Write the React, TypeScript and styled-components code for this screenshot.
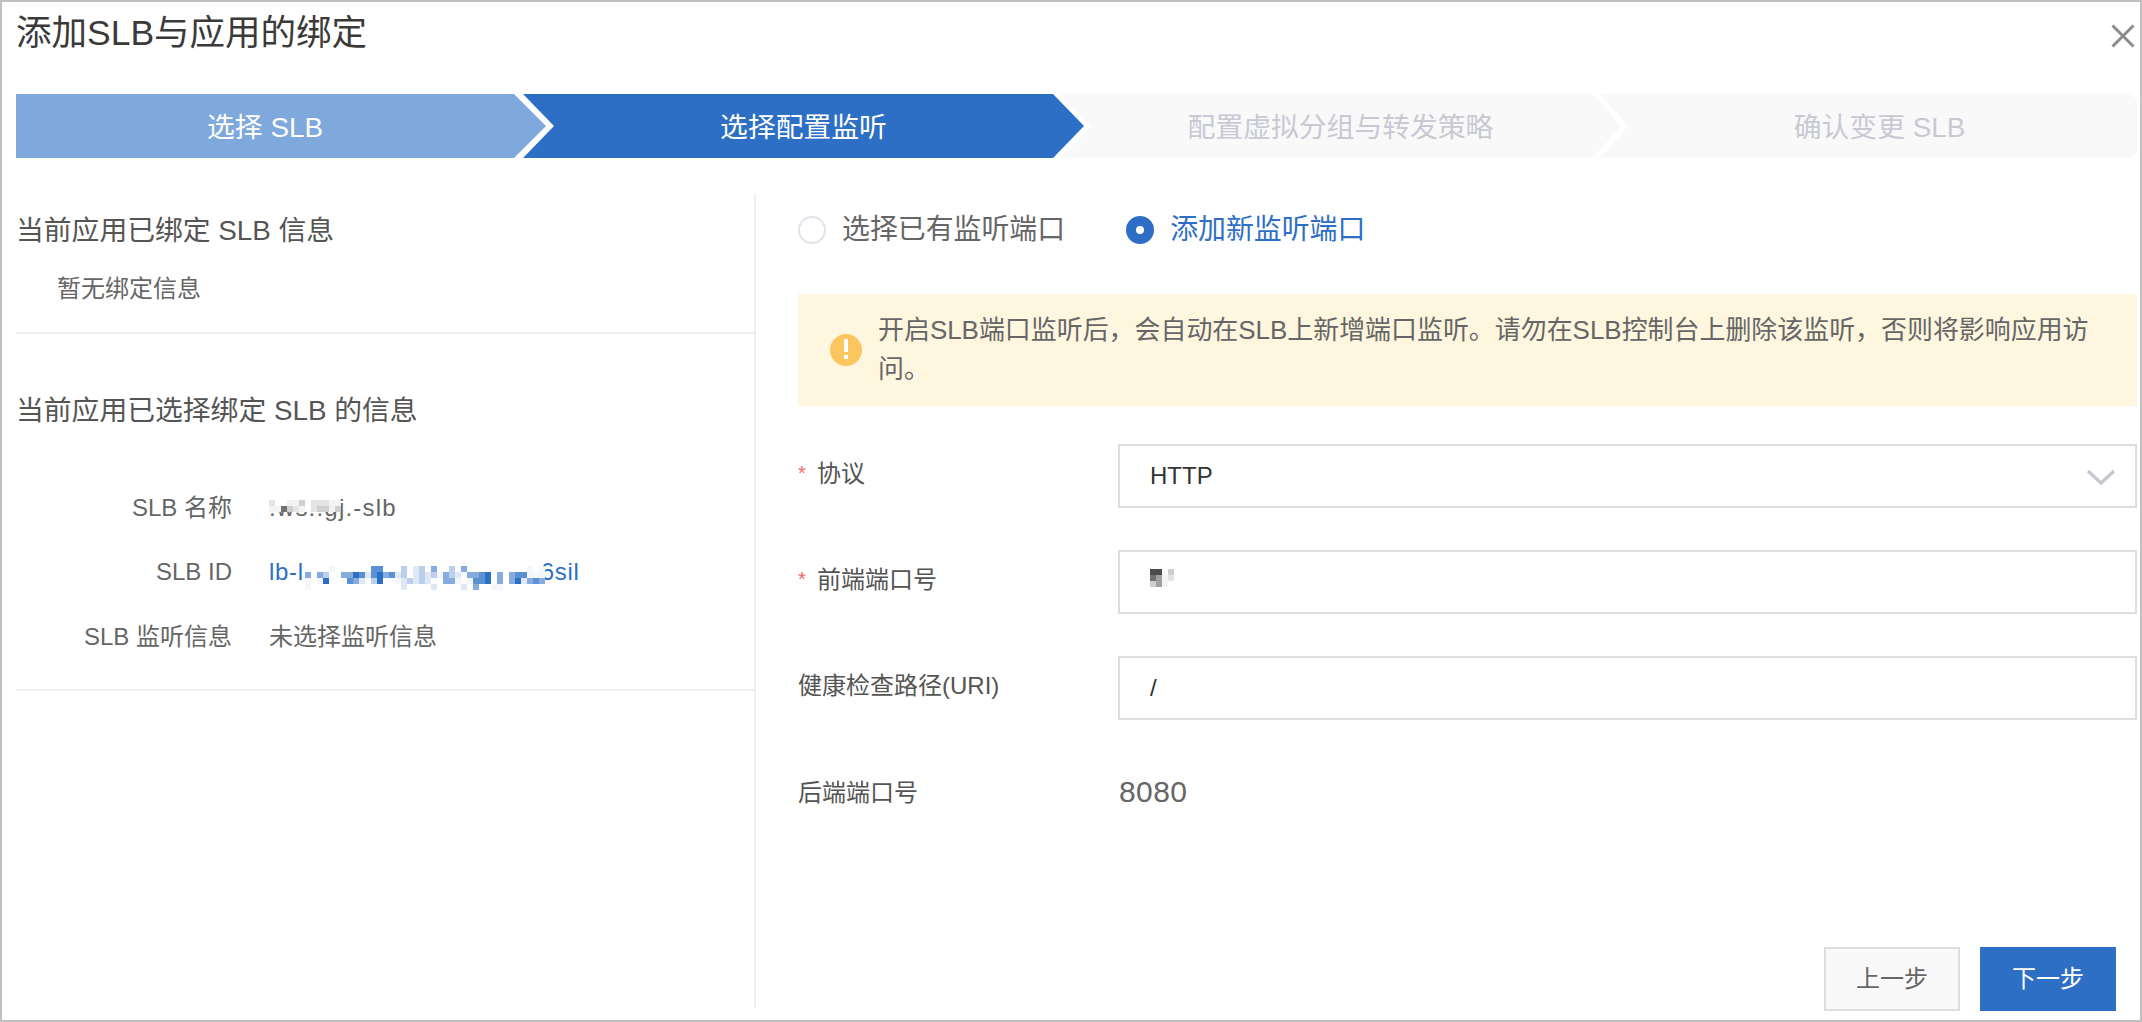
import React from "react";
import styled, { createGlobalStyle } from "styled-components";

const Global = createGlobalStyle`
  html, body { margin: 0; padding: 0; background: #fff; }
  body { font-family: "Liberation Sans", "Noto Sans CJK SC", sans-serif; }
  * { box-sizing: border-box; }
`;

const Frame = styled.div`
  width: 2142px;
  height: 1022px;
  border: 2px solid #c0c0c0;
  padding: 0 3px 0 14px;
  background: #fff;
  overflow: hidden;
`;

const Header = styled.header`
  display: flex;
  justify-content: space-between;
  align-items: flex-start;
  height: 92px;
`;

const Title = styled.h1`
  margin: 0;
  font-size: 35.5px;
  line-height: 62px;
  font-weight: 400;
  color: #3a3a3a;
`;

const CloseIcon = styled.svg`
  width: 24px;
  height: 24px;
  margin-top: 22px;
  margin-right: 2px;
  stroke: #8c8c8c;
  stroke-width: 3;
  fill: none;
`;

const Steps = styled.nav`
  display: flex;
  height: 64px;
`;

const Step = styled.div<{ $bg: string; $fg: string; $w: number; $mr: number; $clip: string; $pl?: number; $pr?: number }>`
  flex: 0 0 ${(p) => p.$w}px;
  margin-right: ${(p) => p.$mr}px;
  padding: 0 ${(p) => p.$pr ?? 0}px 2px ${(p) => p.$pl ?? 0}px;
  display: flex;
  align-items: center;
  justify-content: center;
  background: ${(p) => p.$bg};
  color: ${(p) => p.$fg};
  font-size: 27.8px;
  clip-path: polygon(${(p) => p.$clip});
`;

const Body = styled.div`
  display: grid;
  grid-template-columns: 740px 1fr;
  margin-top: 36px;
  height: 817px;
`;

const LeftPanel = styled.aside`
  height: 814px;
  border-right: 2px solid #f0f0f4;
  padding-top: 19px;
`;

const SectionTitle = styled.h2<{ $mt?: number }>`
  margin: ${(p) => p.$mt ?? 0}px 0 0;
  font-size: 27.8px;
  line-height: 36px;
  font-weight: 400;
  color: #555;
`;

const EmptyNote = styled.div`
  margin-top: 24px;
  padding-left: 41px;
  font-size: 24px;
  line-height: 32px;
  color: #666;
`;

const Rule = styled.hr<{ $mt: number }>`
  margin: ${(p) => p.$mt}px 0 0;
  border: 0;
  height: 2px;
  background: #f0f0f4;
`;

const InfoList = styled.div`
  display: grid;
  grid-template-columns: 216px 1fr;
  column-gap: 37px;
  row-gap: 31.5px;
  margin-top: 63px;
  font-size: 24px;
  line-height: 32px;
`;

const InfoLabel = styled.div`
  text-align: right;
  color: #666;
`;

const InfoValue = styled.div<{ $link?: boolean }>`
  position: relative;
  display: flex;
  align-items: flex-start;
  color: ${(p) => (p.$link ? "#2d6fc5" : "#666")};
  letter-spacing: ${(p) => (p.$link ? "0.7px" : "0")};
`;

const NameText = styled.span`
  letter-spacing: 1.2px;
`;

const MosaicOverlay = styled.svg<{ $top: number; $left: number }>`
  position: absolute;
  top: ${(p) => p.$top}px;
  left: ${(p) => p.$left}px;
  shape-rendering: crispEdges;
`;

const IdMosaic = styled.svg`
  flex: none;
  position: relative;
  z-index: 1;
  margin: 10px -4px 0 1px;
  shape-rendering: crispEdges;
`;

const RightPanel = styled.main`
  display: flex;
  flex-direction: column;
  padding-left: 42px;
  padding-top: 18px;
`;

const RadioGroup = styled.div`
  display: flex;
  gap: 61px;
  height: 36px;
`;

const RadioItem = styled.label<{ $on?: boolean }>`
  display: flex;
  align-items: center;
  gap: 16px;
  font-size: 27.9px;
  line-height: 36px;
  color: ${(p) => (p.$on ? "#2d6fc5" : "#666")};
`;

const RadioMark = styled.span<{ $on?: boolean }>`
  width: 28px;
  height: 28px;
  border-radius: 50%;
  flex: none;
  border: ${(p) => (p.$on ? "10px solid #2d6fc5" : "2px solid #e2e3ea")};
  background: #fff;
`;

const Alert = styled.div`
  display: flex;
  align-items: center;
  gap: 16px;
  height: 112px;
  margin-top: 46px;
  padding: 0 30px 0 32px;
  background: #fef6df;
  font-size: 25.94px;
  line-height: 39px;
  color: #666;
`;

const AlertIcon = styled.span`
  flex: none;
  width: 32px;
  height: 32px;
  border-radius: 50%;
  background: #fbc65f;
  display: flex;
  flex-direction: column;
  align-items: center;
  padding-top: 5px;
  gap: 3px;
`;

const AlertBar = styled.i`
  width: 4px;
  height: 13px;
  background: #fff;
`;

const AlertDot = styled.i`
  width: 4px;
  height: 4px;
  background: #fff;
`;

const Form = styled.div`
  display: grid;
  grid-template-columns: 320px 1fr;
  grid-auto-rows: 64px;
  row-gap: 42px;
  margin-top: 38px;
`;

const FieldLabel = styled.div<{ $nudge?: number }>`
  padding-top: ${(p) => p.$nudge ?? 0}px;
  font-size: 24px;
  line-height: 58px;
  color: #555;
  white-space: nowrap;
`;

const Star = styled.span`
  display: inline-block;
  width: 19px;
  color: #f0696a;
  font-size: 20px;
  vertical-align: 2px;
`;

const Field = styled.div`
  display: flex;
  align-items: center;
  justify-content: space-between;
  height: 64px;
  padding: 0 20px 0 30px;
  border: 2px solid #dedede;
  font-size: 24px;
  color: #333;
  background: #fff;
`;

const Chevron = styled.svg`
  width: 28px;
  height: 16px;
  margin-top: 2px;
  fill: none;
  stroke: #c8c9d0;
  stroke-width: 3.4;
`;

const PortMosaic = styled.svg`
  margin-top: -8px;
  shape-rendering: crispEdges;
`;

const PlainValue = styled.div`
  padding-left: 1px;
  font-size: 30px;
  letter-spacing: 0.4px;
  line-height: 60px;
  color: #666;
`;

const Footer = styled.footer`
  display: flex;
  justify-content: flex-end;
  gap: 20px;
  margin-top: auto;
  padding-right: 21px;
`;

const Button = styled.button<{ $primary?: boolean }>`
  width: 136px;
  height: 64px;
  padding: 0 0 5px;
  font-family: inherit;
  font-size: 24px;
  border: 2px solid ${(p) => (p.$primary ? "#2d6fc5" : "#dedede")};
  background: ${(p) => (p.$primary ? "#2d6fc5" : "#f9f9f9")};
  color: ${(p) => (p.$primary ? "#fff" : "#666")};
`;

const Mosaic = ({ rows, cell, palette }: { rows: string[]; cell: number; palette: Record<string, string> }) => (
  <>
    {rows.map((row, y) =>
      row.split("").map((c, x) =>
        palette[c] ? (
          <rect key={`${x}-${y}`} x={x * cell} y={y * cell} width={cell} height={cell} fill={palette[c]} />
        ) : null,
      ),
    )}
  </>
);

const BLUE: Record<string, string> = {
  w: "#ffffff",
  a: "#f3f6fb",
  b: "#dfe8f6",
  c: "#bcd0ec",
  d: "#85abdf",
  e: "#5a90d4",
  f: "#2d6fc5",
};

const GREY: Record<string, string> = {
  w: "#ffffff",
  a: "#f3f3f3",
  b: "#e4e4e4",
  c: "#cfcfcf",
  d: "#a0a0a0",
  e: "#707070",
  f: "#4c4c4c",
};

const ID_ROWS = [
  "wwwwawwwwwweewwwcwbcwdwwcwdwwwwwwwwwwawa",
  "dwdcwwddfebefdebcwbcbcadcbwddefwdwdeeaaa",
  "awafwwwedbwcfwwabcbcbwwddawaeefwdwdfbded",
  "awwwwwwwwwwwwwwwbwwwwbwwwwbwdwwaawwwwwww",
];

const NAME_ROWS = [
  "bwwaacwbbbaa",
  "aaecbawbccac",
];

const PORT_ROWS = ["ffwc", "edab", "cdaw"];

export default function App() {
  return (
    <Frame>
      <Global />
      <Header>
        <Title>添加SLB与应用的绑定</Title>
        <CloseIcon viewBox="0 0 24 24">
          <path d="M1.5 1.5 22.5 22.5M22.5 1.5 1.5 22.5" />
        </CloseIcon>
      </Header>

      <Steps>
        <Step
          $bg="#7fa8dc"
          $fg="#fff"
          $w={530}
          $mr={-23}
          $pr={32}
          $clip="0 0, 498px 0, 530px 32px, 498px 64px, 0 64px"
        >
          选择 SLB
        </Step>
        <Step
          $bg="#2d6fc5"
          $fg="#fff"
          $w={561}
          $mr={-24}
          $clip="0 0, 530px 0, 561px 32px, 530px 64px, 0 64px, 31px 32px"
        >
          选择配置监听
        </Step>
        <Step
          $bg="#f9f9f9"
          $fg="#c8c9d4"
          $w={561}
          $mr={-21}
          $clip="0 0, 533px 0, 561px 32px, 533px 64px, 0 64px, 31px 32px"
        >
          配置虚拟分组与转发策略
        </Step>
        <Step
          $bg="#f9f9f9"
          $fg="#c8c9d4"
          $w={537}
          $mr={0}
          $pl={22}
          $clip="0 0, 531px 0, 537px 6px, 537px 58px, 531px 64px, 0 64px, 28px 32px"
        >
          确认变更 SLB
        </Step>
      </Steps>

      <Body>
        <LeftPanel>
          <SectionTitle>当前应用已绑定 SLB 信息</SectionTitle>
          <EmptyNote>暂无绑定信息</EmptyNote>
          <Rule $mt={27} />
          <SectionTitle $mt={59}>当前应用已选择绑定 SLB 的信息</SectionTitle>
          <InfoList>
            <InfoLabel>SLB 名称</InfoLabel>
            <InfoValue>
              <NameText>.ws..gj.-slb</NameText>
              <MosaicOverlay $top={8} $left={0} width={72} height={12} viewBox="0 0 72 12">
                <Mosaic rows={NAME_ROWS} cell={6} palette={GREY} />
              </MosaicOverlay>
            </InfoValue>
            <InfoLabel>SLB ID</InfoLabel>
            <InfoValue $link>
              lb-l
              <IdMosaic width={240} height={24} viewBox="0 0 240 24">
                <Mosaic rows={ID_ROWS} cell={6} palette={BLUE} />
              </IdMosaic>
              6sil
            </InfoValue>
            <InfoLabel>SLB 监听信息</InfoLabel>
            <InfoValue>未选择监听信息</InfoValue>
          </InfoList>
          <Rule $mt={36} />
        </LeftPanel>

        <RightPanel>
          <RadioGroup>
            <RadioItem>
              <RadioMark />
              选择已有监听端口
            </RadioItem>
            <RadioItem $on>
              <RadioMark $on />
              添加新监听端口
            </RadioItem>
          </RadioGroup>

          <Alert>
            <AlertIcon>
              <AlertBar />
              <AlertDot />
            </AlertIcon>
            <span>开启SLB端口监听后，会自动在SLB上新增端口监听。请勿在SLB控制台上删除该监听，否则将影响应用访问。</span>
          </Alert>

          <Form>
            <FieldLabel>
              <Star>*</Star>协议
            </FieldLabel>
            <Field>
              HTTP
              <Chevron viewBox="0 0 28 16">
                <path d="M1 2 14 14 27 2" />
              </Chevron>
            </Field>
            <FieldLabel>
              <Star>*</Star>前端端口号
            </FieldLabel>
            <Field>
              <PortMosaic width={24} height={18} viewBox="0 0 24 18">
                <Mosaic rows={PORT_ROWS} cell={6} palette={GREY} />
              </PortMosaic>
            </Field>
            <FieldLabel $nudge={1}>健康检查路径(URI)</FieldLabel>
            <Field>/</Field>
            <FieldLabel $nudge={2}>后端端口号</FieldLabel>
            <PlainValue>8080</PlainValue>
          </Form>

          <Footer>
            <Button>上一步</Button>
            <Button $primary>下一步</Button>
          </Footer>
        </RightPanel>
      </Body>
    </Frame>
  );
}
